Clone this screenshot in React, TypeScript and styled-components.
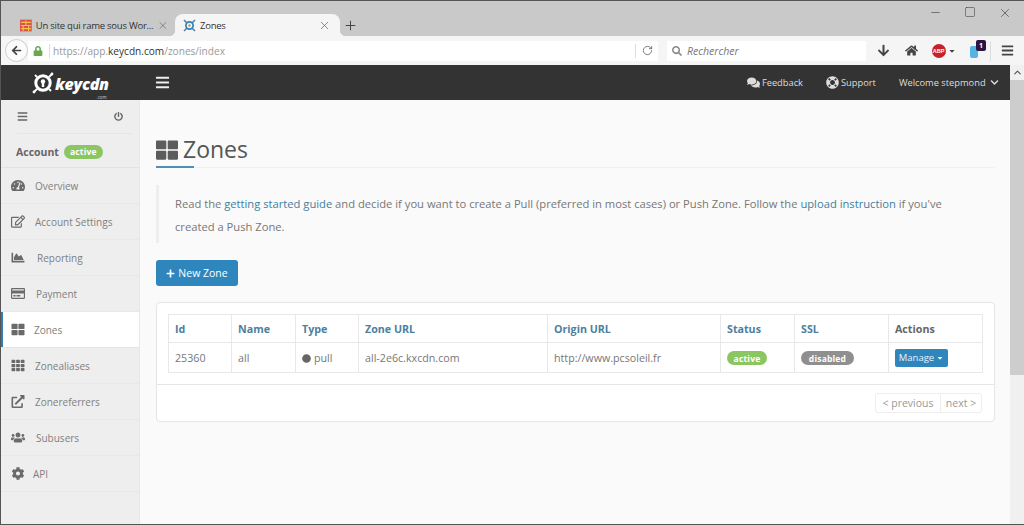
import React from "react";
import styled, { createGlobalStyle } from "styled-components";
import {
  FaArrowLeft, FaLock, FaSearch, FaArrowDown, FaHome, FaBars, FaPowerOff, FaTachometerAlt, FaRegEdit,
  FaChartArea, FaRegCreditCard, FaThLarge, FaTh, FaExternalLinkAlt, FaUsers, FaCog, FaComments,
  FaLifeRing, FaChevronDown, FaPlus, FaCaretDown, FaCircle,
} from "react-icons/fa";
import { RotateCw, X, Plus, Minus, Square, ChevronUp } from "lucide-react";

const Global = createGlobalStyle`
  html, body { margin: 0; padding: 0; width: 1024px; height: 525px; overflow: hidden; }
  * { box-sizing: border-box; }
  body { font-family: "Open Sans", "Liberation Sans", sans-serif; color: #777; }
`;

const Win = styled.div`
  width: 1024px; height: 525px; display: flex; flex-direction: column;
  border-top: 1px solid #555; border-left: 1px solid #555; border-bottom: 1px solid #555; overflow: hidden;
`;
const TabStrip = styled.div`
  height: 35px; background: #c9c9c9; display: flex; align-items: flex-end; padding-left: 17px; flex: none;
`;
const Tab = styled.div<{ $active?: boolean }>`
  height: 22px; display: flex; align-items: center; font-size: 9.5px; letter-spacing: -0.25px; color: #333; position: relative;
  width: ${p => (p.$active ? 165 : 157)}px;
  padding-left: ${p => (p.$active ? 8 : 2)}px;
  padding-right: ${p => (p.$active ? 9 : 6)}px;
  background: ${p => (p.$active ? "#f5f5f5" : "transparent")};
  border-radius: 8px 8px 0 0;
  gap: 4px;
  ${p =>
    p.$active
      ? `&::before, &::after { content: ""; position: absolute; bottom: 0; width: 6px; height: 6px; }
         &::before { left: -6px; background: radial-gradient(circle at 0 0, transparent 6px, #f5f5f5 6.5px); }
         &::after { right: -6px; background: radial-gradient(circle at 100% 0, transparent 6px, #f5f5f5 6.5px); }`
      : ""}
`;
const TabTitle = styled.span`flex: 1; white-space: nowrap;`;
const NewTab = styled.div`height: 22px; margin-left: 3px; display: flex; align-items: center; color: #444;`;
const WinControls = styled.div`
  margin-left: auto; align-self: flex-start; display: flex; gap: 22px; padding: 5px 12px 0 0; color: #444;
`;
const NavBar = styled.div`
  height: 29px; background: #f5f5f5; display: flex; align-items: center; flex: none; padding-left: 4px;
`;
const BackBtn = styled.div`
  width: 23px; height: 23px; border-radius: 50%; border: 1px solid #ccc; background: #fbfbfb;
  display: flex; align-items: center; justify-content: center; color: #444; font-size: 11px; flex: none;
`;
const UrlBar = styled.div`
  width: 630px; height: 20px; background: #fff; display: flex; align-items: center; padding-left: 5px;
  font-size: 10.1px; color: #999; white-space: nowrap; flex: none;
`;
const LockIcon = styled(FaLock)`color: #6aa84f; font-size: 10px; margin-right: 6px; flex: none;`;
const UrlText = styled.span`border-left: 1px solid #ddd; padding-left: 3px; flex: 1; line-height: 14px;`;
const UrlHost = styled.b`font-weight: 400; color: #333;`;
const Reload = styled.div`
  border-left: 1px solid #ddd; height: 14px; padding: 0 5px 0 6px; display: flex; align-items: center; color: #666;
`;
const SearchBox = styled.div`
  width: 199px; height: 20px; margin-left: 9px; background: #fff; display: flex; align-items: center;
  gap: 5px; padding-left: 5px; font-size: 10.5px; font-style: italic; color: #777; flex: none;
`;
const Tools = styled.div`display: flex; align-items: center; color: #444; flex: 1; height: 100%;`;
const ToolBtn = styled.div<{ $w: number; $line?: boolean }>`
  width: ${p => p.$w}px; display: flex; align-items: center; justify-content: center; font-size: 13px; position: relative;
  height: 20px; ${p => (p.$line ? "border-left: 1px solid #ddd;" : "")}
`;
const Abp = styled.span`
  width: 14px; height: 14px; border-radius: 50%; background: #c8202a; color: #fff; font-size: 5.5px; font-weight: 700;
  display: flex; align-items: center; justify-content: center; font-family: "Liberation Sans", sans-serif; margin: 0 2px 0 7px;
`;
const ExtIcon = styled.span`width: 8px; height: 12px; background: #55b4e4; border-radius: 2px; margin-top: 3px;`;
const ExtBadge = styled.span`
  position: absolute; top: -1px; left: 18px; width: 10px; height: 11px; background: #2d1440; color: #fff;
  font-size: 7px; font-weight: 700; border-radius: 2px; display: flex; align-items: center; justify-content: center;
`;
const Viewport = styled.div`flex: 1; display: flex; min-height: 0;`;
const Page = styled.div`flex: 1; display: flex; flex-direction: column; min-width: 0;`;
const Scrollbar = styled.div`
  width: 14px; flex: none; background: #f0f0f0; display: flex; flex-direction: column; align-items: center;
`;
const ScrollUp = styled.div`height: 15px; display: flex; align-items: center; color: #555;`;
const Thumb = styled.div`width: 14px; height: 295px; background: #cdcdcd;`;
const Header = styled.header`
  height: 35px; background: #333; color: #ddd; display: flex; align-items: center; flex: none; font-size: 9.3px; padding-right: 11px;
`;
const Logo = styled.div`
  width: 154px; padding-left: 30px; display: flex; align-items: center; gap: 0; color: #fff; flex: none;
`;
const LogoWords = styled.div`display: flex; flex-direction: column; align-items: flex-end; align-self: flex-start; margin-top: 7px;`;
const LogoText = styled.span`
  font-family: "Open Sans", sans-serif; font-weight: 800; font-style: italic; font-size: 16px; letter-spacing: -0.3px;
`;
const LogoCom = styled.span`font-size: 4.5px; line-height: 5px; color: #ccc; margin-right: 2px;`;
const Burger = styled(FaBars)`color: #eee; font-size: 15px;`;
const HeadRight = styled.div`margin-left: auto; display: flex; align-items: center; gap: 23px;`;
const HeadItem = styled.span`display: flex; align-items: center; gap: 2px; white-space: nowrap;`;
const Body = styled.div`flex: 1; display: flex; min-height: 0; background: #fafafa;`;
const Sidebar = styled.aside`
  width: 139px; flex: none; background: #eeeeee; border-right: 1px solid #e8e8e8; display: flex; flex-direction: column;
`;
const SideTop = styled.div`
  height: 34px; margin: 0 7px 0 16px; display: flex; align-items: center; justify-content: space-between;
  font-size: 10px; color: #666; border-bottom: 1px solid #e6e6e6; padding-right: 9px;
`;
const Account = styled.div`
  height: 34px; padding: 2px 0 0 15px; display: flex; align-items: center; gap: 5px; font-size: 10.5px; font-weight: 700;
  color: #666; border-bottom: 1px solid #e2e2e2;
`;
const Pill = styled.span<{ $c: string; $w: number; $h?: number }>`
  width: ${p => p.$w}px; height: ${p => p.$h ?? 14}px; border-radius: 8px; background: ${p => p.$c}; color: #fff; font-size: 8.5px; font-weight: 700;
  display: inline-flex; align-items: center; justify-content: center; letter-spacing: .2px; vertical-align: middle;
`;
const SideItem = styled.div<{ $active?: boolean; $gap: number }>`
  height: 36px; display: flex; align-items: center; padding-left: 10px; font-size: 10px; color: #808080;
  gap: ${p => p.$gap}px;
  background: ${p => (p.$active ? "#fff" : "transparent")};
  border-bottom: 1px solid ${p => (p.$active ? "#e4e4e4" : "#e8e8e8")};
  box-shadow: ${p => (p.$active ? "inset 2px 0 0 #2e7fb0" : "none")};
  & svg { width: 14px; height: 13px; color: #6a6a6a; flex: none; }
`;
const Main = styled.main`flex: 1; padding: 34px 15px 0 16px; min-width: 0;`;
const Title = styled.div`
  display: flex; align-items: center; gap: 5px; height: 34px; padding-bottom: 2px; color: #555; font-size: 23px; line-height: 1;
  border-bottom: 1px solid #f0f0f0; position: relative;
  & svg { width: 22px; height: 22px; color: #5c5c5c; }
  &::after { content: ""; position: absolute; left: 0; bottom: -1px; width: 38px; height: 2px; background: #4d8fb5; }
`;
const Callout = styled.div`
  margin-top: 17px; height: 58px; border-left: 3px solid #eee; padding: 7px 0 0 16px; font-size: 11.2px; line-height: 23px; color: #777;
`;
const A = styled.span`color: #3f7f9e;`;
const NewBtn = styled.div`
  margin-top: 17px; width: 82px; height: 26px; border-radius: 3px; background: #2f86bd; color: #fff;
  display: flex; align-items: center; justify-content: center; gap: 3px; font-size: 10.5px;
  & svg { font-size: 9px; }
`;
const Panel = styled.section`
  margin-top: 16px; height: 120px; background: #fff; border: 1px solid #e5e5e5; border-radius: 4px; display: flex; flex-direction: column;
`;
const TableWrap = styled.div`padding: 11px 11px 0; height: 82px; border-bottom: 1px solid #e5e5e5; flex: none;`;
const Table = styled.table`
  border-collapse: collapse; table-layout: fixed; width: 814px; font-size: 10.7px;
  & th, & td { border: 1px solid #e8e8e8; padding: 0 6px; text-align: left; overflow: hidden; white-space: nowrap; }
  & th { height: 28px; font-weight: 700; color: #4d7f9e; }
  & td { height: 30px; color: #777; }
`;
const ThDark = styled.th`&& { color: #666; }`;
const Dot = styled(FaCircle)`font-size: 9px; color: #666; margin-right: 3px; vertical-align: -1px;`;
const Manage = styled.span`
  display: inline-flex; align-items: center; justify-content: center; gap: 2px; width: 53px; height: 18px; background: #2f86bd; color: #e8f2f8; font-size: 9.5px; border-radius: 2px; vertical-align: middle;
  & svg { font-size: 8px; }
`;
const Footer = styled.div`flex: 1; display: flex; justify-content: flex-end; align-items: center; padding-right: 12px;`;
const Pager = styled.div`display: flex; height: 20px; border: 1px solid #eee; border-radius: 3px; font-size: 10.5px; color: #999; background: #fff;`;
const PageLink = styled.span<{ $w: number }>`
  width: ${p => p.$w}px; display: flex; align-items: center; justify-content: center; white-space: nowrap;
  & + & { border-left: 1px solid #eee; }
`;

const items: [React.ComponentType, string, number, boolean?][] = [
  [FaTachometerAlt, "Overview", 10],
  [FaRegEdit, "Account Settings", 10],
  [FaChartArea, "Reporting", 12],
  [FaRegCreditCard, "Payment", 11],
  [FaThLarge, "Zones", 9, true],
  [FaTh, "Zonealiases", 10],
  [FaExternalLinkAlt, "Zonereferrers", 10],
  [FaUsers, "Subusers", 11],
  [FaCog, "API", 8],
];

const KeyLogo = () => (
  <svg width="24" height="26" viewBox="0 0 24 26" fill="none" stroke="#fff">
    <circle cx="12" cy="13" r="7.2" strokeWidth="3" />
    <circle cx="12" cy="11.5" r="2.2" fill="#fff" strokeWidth="0" />
    <rect x="10.8" y="12" width="2.4" height="5" fill="#fff" strokeWidth="0" />
    <path d="M6 19l-3 3M18 7l3-3M6 7L4 5M18 19l2 2" strokeWidth="1.8" />
    <circle cx="3" cy="22" r="1.4" fill="#fff" strokeWidth="0" />
    <circle cx="21" cy="4" r="1.4" fill="#fff" strokeWidth="0" />
  </svg>
);

const Favicon1 = () => (
  <svg width="13" height="13" viewBox="0 0 13 13">
    <rect width="13" height="13" fill="#d9534f" />
    <path d="M1 3h11M1 6.5h11M1 10h11M6.5 1v5M3.5 6.5v6M9.5 6.5v6" stroke="#f6c244" strokeWidth="1.2" />
  </svg>
);
const Favicon2 = () => (
  <svg width="13" height="13" viewBox="0 0 13 13">
    <path d="M1 1l3 3M12 1L9 4M1 12l3-3M12 12L9 9" stroke="#5a7f99" strokeWidth="1.5" />
    <circle cx="6.5" cy="6.5" r="3.6" fill="none" stroke="#2f86bd" strokeWidth="1.8" />
    <circle cx="6.5" cy="6.5" r="1.2" fill="#e08a3c" />
  </svg>
);

export default function App() {
  return (
    <Win>
      <Global />
      <TabStrip>
        <Tab>
          <Favicon1 />
          <TabTitle>Un site qui rame sous Wor...</TabTitle>
          <X size={13} strokeWidth={1.2} color="#555" />
        </Tab>
        <Tab $active>
          <Favicon2 />
          <TabTitle>Zones</TabTitle>
          <X size={13} strokeWidth={1.2} color="#555" />
        </Tab>
        <NewTab><Plus size={15} strokeWidth={1.6} /></NewTab>
        <WinControls>
          <Minus size={13} strokeWidth={1.2} />
          <Square size={12} strokeWidth={1.2} />
          <X size={14} strokeWidth={1.2} />
        </WinControls>
      </TabStrip>
      <NavBar>
        <BackBtn><FaArrowLeft /></BackBtn>
        <UrlBar>
          <LockIcon />
          <UrlText>https://app.<UrlHost>keycdn.com</UrlHost>/zones/index</UrlText>
          <Reload><RotateCw size={11} strokeWidth={1.8} /></Reload>
        </UrlBar>
        <SearchBox><FaSearch color="#888" size={10} /> Rechercher</SearchBox>
        <Tools>
          <ToolBtn $w={34}><FaArrowDown /></ToolBtn>
          <ToolBtn $w={22}><FaHome size={13} /></ToolBtn>
          <ToolBtn $w={36}><Abp>ABP</Abp><FaCaretDown size={8} /></ToolBtn>
          <ToolBtn $w={32}><ExtIcon /><ExtBadge>1</ExtBadge></ToolBtn>
          <ToolBtn $w={33} $line><FaBars size={13} /></ToolBtn>
        </Tools>
      </NavBar>
      <Viewport>
        <Page>
          <Header>
            <Logo>
              <KeyLogo />
              <LogoWords>
                <LogoText>keycdn</LogoText>
                <LogoCom>.com</LogoCom>
              </LogoWords>
            </Logo>
            <Burger />
            <HeadRight>
              <HeadItem><FaComments size={13} />Feedback</HeadItem>
              <HeadItem><FaLifeRing size={13} />Support</HeadItem>
              <HeadItem>Welcome stepmond&nbsp;<FaChevronDown size={9} /></HeadItem>
            </HeadRight>
          </Header>
          <Body>
            <Sidebar>
              <SideTop><FaBars size={11} /><FaPowerOff size={9} /></SideTop>
              <Account>Account <Pill $c="#8cc663" $w={39}>active</Pill></Account>
              {items.map(([Icon, label, gap, active]) => (
                <SideItem key={label} $gap={gap} $active={active}><Icon />{label}</SideItem>
              ))}
            </Sidebar>
            <Main>
              <Title><FaThLarge />Zones</Title>
              <Callout>
                Read the <A>getting started guide</A> and decide if you want to create a Pull (preferred in most cases) or Push Zone. Follow the <A>upload instruction</A> if you've<br />created a Push Zone.
              </Callout>
              <NewBtn><FaPlus />New Zone</NewBtn>
              <Panel>
                <TableWrap>
                  <Table>
                    <colgroup>
                      <col width="63" /><col width="64" /><col width="63" /><col width="189" />
                      <col width="173" /><col width="74" /><col width="94" /><col width="94" />
                    </colgroup>
                    <thead>
                      <tr>
                        <th>Id</th><th>Name</th><th>Type</th><th>Zone URL</th><th>Origin URL</th><th>Status</th><th>SSL</th><ThDark>Actions</ThDark>
                      </tr>
                    </thead>
                    <tbody>
                      <tr>
                        <td>25360</td><td>all</td><td><Dot />pull</td><td>all-2e6c.kxcdn.com</td><td>http://www.pcsoleil.fr</td>
                        <td><Pill $c="#8cc663" $w={40}>active</Pill></td>
                        <td><Pill $c="#8f8f8f" $w={53}>disabled</Pill></td>
                        <td><Manage>Manage <FaCaretDown /></Manage></td>
                      </tr>
                    </tbody>
                  </Table>
                </TableWrap>
                <Footer>
                  <Pager><PageLink $w={64}>&lt; previous</PageLink><PageLink $w={41}>next &gt;</PageLink></Pager>
                </Footer>
              </Panel>
            </Main>
          </Body>
        </Page>
        <Scrollbar>
          <ScrollUp><ChevronUp size={11} strokeWidth={2.5} /></ScrollUp>
          <Thumb />
        </Scrollbar>
      </Viewport>
    </Win>
  );
}
